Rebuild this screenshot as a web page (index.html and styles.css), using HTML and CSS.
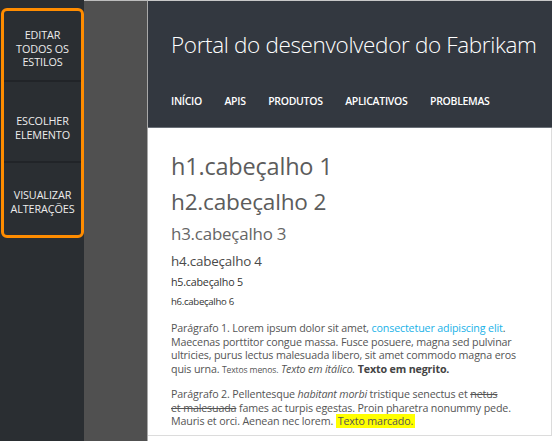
FILE: index.html
```html
<!DOCTYPE html>
<html lang="pt">
<head>
<meta charset="utf-8">
<link rel="stylesheet" href="styles.css">
</head>
<body>
<div class="page">
  <aside class="tools">
    <div class="tool-group">
      <div class="tool tool-1">EDITAR<br>TODOS OS<br>ESTILOS</div>
      <div class="tool tool-2">ESCOLHER<br>ELEMENTO</div>
      <div class="tool tool-3">VISUALIZAR<br>ALTERAÇÕES</div>
    </div>
  </aside>
  <div class="gutter"></div>
  <div class="site">
    <header class="site-header">
      <div class="title">Portal do desenvolvedor do Fabrikam</div>
      <nav class="nav">
        <span>INÍCIO</span><span>APIS</span><span>PRODUTOS</span><span>APLICATIVOS</span><span>PROBLEMAS</span>
      </nav>
    </header>
    <main class="content">
      <h1>h1.cabeçalho 1</h1>
      <h2>h2.cabeçalho 2</h2>
      <h3>h3.cabeçalho 3</h3>
      <h4>h4.cabeçalho 4</h4>
      <h5>h5.cabeçalho 5</h5>
      <h6>h6.cabeçalho 6</h6>
      <p>Parágrafo 1. Lorem ipsum dolor sit amet, <a>consectetuer adipiscing elit</a>. Maecenas porttitor congue massa. Fusce posuere, magna sed pulvinar ultricies, purus lectus malesuada libero, sit amet commodo magna eros quis urna. <small>Textos menos.</small> <em>Texto em itálico.</em> <strong>Texto em negrito.</strong></p>
      <p>Parágrafo 2. Pellentesque <em>habitant morbi</em> tristique senectus et <s>netus<br>et malesuada</s> fames ac turpis egestas. Proin pharetra nonummy pede. Mauris et orci. Aenean nec lorem. <mark>Texto marcado.</mark></p>
    </main>
  </div>
</div>
</body>
</html>
```

FILE: styles.css
```css
html, body {
  margin: 0;
  padding: 0;
  background: #ffffff;
}
body {
  font-family: "Open Sans", "Noto Sans", sans-serif;
  width: 554px;
  height: 441px;
  overflow: hidden;
}
.page {
  display: flex;
  height: 441px;
}
.tools {
  width: 84px;
  background: #2a2e32;
  padding-top: 8px;
  box-sizing: border-box;
  flex-shrink: 0;
}
.tool-group {
  margin-left: 1px;
  width: 83px;
  box-sizing: border-box;
  border: 3px solid #ff8c00;
  border-radius: 6px;
  display: flex;
  flex-direction: column;
}
.tool {
  display: flex;
  align-items: center;
  justify-content: center;
  text-align: center;
  color: #ececec;
  font-size: 10.8px;
  line-height: 13.7px;
  letter-spacing: -0.1px;
  box-sizing: border-box;
}
.tool-1 { height: 71px; border-bottom: 2px solid #212428; padding-top: 6px; }
.tool-2 { height: 81px; border-bottom: 2px solid #212428; padding-top: 13px; }
.tool-3 { height: 72px; padding-top: 6px; }
.gutter {
  width: 63px;
  background: #505050;
  border-top: 1px solid #bdbdbd;
  flex-shrink: 0;
}
.site {
  width: 404px;
  border-top: 1px solid #c8c8c8;
  border-left: 1px solid #a8a8a8;
  display: flex;
  flex-direction: column;
  flex-shrink: 0;
}
.site-header {
  background: #333840;
  height: 127px;
  box-sizing: border-box;
  padding: 29px 0 0 23px;
  border-bottom: 1px solid #6a7078;
}
.title {
  font-weight: 300;
  color: #ffffff;
  font-size: 22.5px;
  line-height: 30px;
  letter-spacing: -0.35px;
  white-space: nowrap;
}
.nav {
  margin-top: 34px;
  display: flex;
  gap: 22.5px;
  color: #ffffff;
  font-size: 10.5px;
  font-weight: 600;
  letter-spacing: -0.3px;
}
.content {
  background: #ffffff;
  border-right: 1px solid #dcdcdc;
  border-bottom: 1px solid #dcdcdc;
  height: 308px;
  padding: 23px 28px 0 23px;
  color: #555555;
  box-sizing: border-box;
}
h1, h2, h3, h4, h5, h6 {
  margin: 0;
  font-weight: 400;
  color: #5c5c5c;
  letter-spacing: -0.2px;
}
h1 { font-size: 23.5px; line-height: 30px; margin-bottom: 6px; }
h2 { font-size: 22.6px; line-height: 30px; margin-bottom: 6px; }
h3 { font-size: 16.9px; line-height: 22px; margin-bottom: 7px; color: #666; }
h4 { font-size: 13.4px; line-height: 18px; margin-bottom: 4px; color: #4a4a4a; }
h5 { font-size: 10.7px; line-height: 16px; margin-bottom: 5px; color: #333; }
h6 { font-size: 9.6px; line-height: 14px; margin-bottom: 13px; color: #333; letter-spacing: -0.3px; }
p {
  margin: 0 0 10px 0;
  font-size: 10.7px;
  line-height: 13.7px;
  letter-spacing: -0.15px;
  color: #555555;
}
a { color: #1ab2e8; }
small { font-size: 8.6px; }
strong { font-weight: 700; color: #444; }
mark { background: #ffff00; color: #555; padding: 0 2px; }
```
